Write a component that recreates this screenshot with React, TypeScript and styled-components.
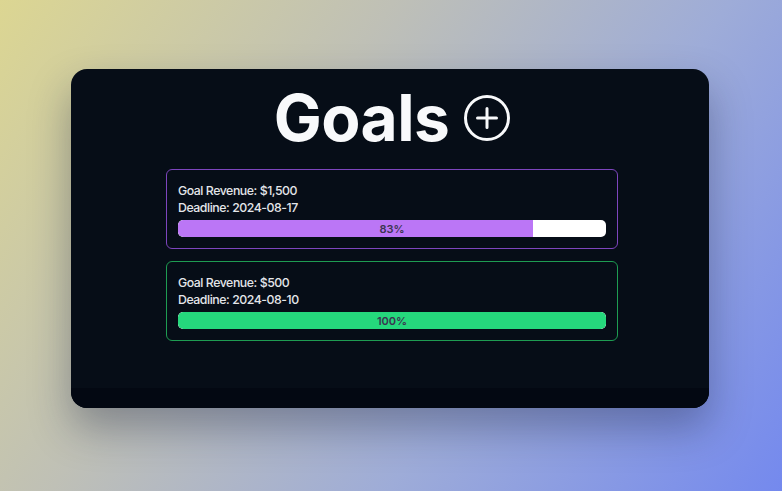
import styled, { createGlobalStyle } from "styled-components";

const goals = [
  { revenue: "$1,500", deadline: "2024-08-17", progress: 83, tone: "purple" as const },
  { revenue: "$500", deadline: "2024-08-10", progress: 100, tone: "green" as const },
];

const tones = {
  purple: { border: "#7d45bd", fill: "#bb76f6" },
  green: { border: "#1e9c52", fill: "#25d87c" },
};

const GlobalStyle = createGlobalStyle`
  html, body {
    margin: 0;
    height: 100%;
  }
  body {
    font-family: Inter, "Noto Sans", sans-serif;
    background: linear-gradient(125deg, #dcd692 0%, #bfc0b6 35%, #9eacd8 65%, #7489ee 100%);
    min-height: 491px;
  }
`;

const Page = styled.div`
  display: flex;
  justify-content: center;
  padding: 69px 2px 0 0;
`;

const Card = styled.div`
  width: 638px;
  height: 339px;
  border-radius: 16px;
  background: #060d17;
  overflow: hidden;
  display: flex;
  flex-direction: column;
  box-shadow: 0 20px 40px rgba(20, 30, 60, 0.35);
`;

const Main = styled.main`
  flex: 1;
  display: flex;
  flex-direction: column;
  align-items: center;
  padding-top: 17px;
`;

const Footer = styled.footer`
  height: 20px;
  background: #030812;
`;

const TitleRow = styled.div`
  display: flex;
  align-items: center;
  gap: 15px;
  margin-left: 4px;
`;

const Title = styled.h1`
  margin: 0;
  font-size: 64px;
  line-height: 64px;
  font-weight: 700;
  color: #f8f9fb;
  letter-spacing: -0.5px;
`;

const AddButton = styled.button`
  border: 0;
  padding: 0;
  background: none;
  display: flex;
  cursor: pointer;
`;

const List = styled.div`
  margin-top: 19px;
  margin-left: 4px;
  width: 452px;
  display: flex;
  flex-direction: column;
  gap: 12px;
`;

const GoalBox = styled.div<{ $border: string }>`
  border: 1px solid ${(p) => p.$border};
  border-radius: 6px;
  padding: 12px 11px 11px;
  display: flex;
  flex-direction: column;
`;

const Line = styled.div`
  font-size: 12.3px;
  line-height: 17px;
  font-weight: 500;
  letter-spacing: -0.45px;
  color: #e4e6ea;
`;

const Bar = styled.div`
  position: relative;
  margin-top: 4px;
  height: 17px;
  border-radius: 5px;
  background: #ffffff;
  overflow: hidden;
`;

const Fill = styled.div<{ $color: string }>`
  height: 100%;
  background: ${(p) => p.$color};
  border-radius: 5px 0 0 5px;
`;

const BarLabel = styled.span`
  position: absolute;
  inset: 0;
  display: flex;
  align-items: center;
  justify-content: center;
  font-size: 11px;
  font-weight: 600;
  color: #3a3450;
`;

const PlusCircle = () => (
  <svg width="46" height="46" viewBox="0 0 46 46" fill="none" stroke="#f8f9fb" strokeWidth="3" strokeLinecap="round">
    <circle cx="23" cy="23" r="21.5" />
    <path d="M23 13.5v19M13.5 23h19" />
  </svg>
);

export default function App() {
  return (
    <>
      <GlobalStyle />
      <Page>
        <Card>
          <Main>
            <TitleRow>
              <Title>Goals</Title>
              <AddButton aria-label="Add goal">
                <PlusCircle />
              </AddButton>
            </TitleRow>
            <List>
              {goals.map((g) => (
                <GoalBox key={g.deadline} $border={tones[g.tone].border}>
                  <Line>Goal Revenue: {g.revenue}</Line>
                  <Line>Deadline: {g.deadline}</Line>
                  <Bar>
                    <Fill
                      $color={tones[g.tone].fill}
                      style={{ width: `${g.progress}%`, borderRadius: g.progress >= 100 ? 5 : undefined }}
                    />
                    <BarLabel>{g.progress}%</BarLabel>
                  </Bar>
                </GoalBox>
              ))}
            </List>
          </Main>
          <Footer />
        </Card>
      </Page>
    </>
  );
}
